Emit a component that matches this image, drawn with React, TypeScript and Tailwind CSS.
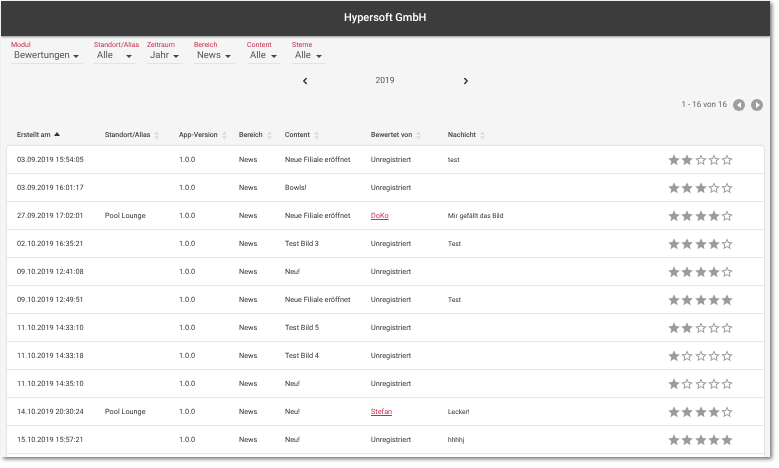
import { ChevronLeft, ChevronRight } from "lucide-react";

const filters = [
  { label: "Modul", value: "Bewertungen", width: "w-[72px]", gap: "mr-[11px]" },
  { label: "Standort/Alias", value: "Alle", width: "w-[42px]", gap: "mr-[11px]" },
  { label: "Zeitraum", value: "Jahr", width: "w-[36px]", gap: "mr-[11px]" },
  { label: "Bereich", value: "News", width: "w-[41px]", gap: "mr-[12px]" },
  { label: "Content", value: "Alle", width: "w-[34px]", gap: "mr-[11px]" },
  { label: "Sterne", value: "Alle", width: "w-[34px]", gap: "" },
];

const columns = ["Standort/Alias", "App-Version", "Bereich", "Content", "Bewertet von", "Nachicht"];

const rows = [
  { date: "03.09.2019 15:54:05", alias: "", content: "Neue Filiale eröffnet", by: "Unregistriert", note: "test", stars: 2 },
  { date: "03.09.2019 16:01:17", alias: "", content: "Bowls!", by: "Unregistriert", note: "", stars: 3 },
  { date: "27.09.2019 17:02:01", alias: "Pool Lounge", content: "Neue Filiale eröffnet", by: "DoKo", note: "Mir gefällt das Bild", stars: 4 },
  { date: "02.10.2019 16:35:21", alias: "", content: "Test Bild 3", by: "Unregistriert", note: "Test", stars: 4 },
  { date: "09.10.2019 12:41:08", alias: "", content: "Neu!", by: "Unregistriert", note: "", stars: 4 },
  { date: "09.10.2019 12:49:51", alias: "", content: "Neue Filiale eröffnet", by: "Unregistriert", note: "Test", stars: 5 },
  { date: "11.10.2019 14:33:10", alias: "", content: "Test Bild 5", by: "Unregistriert", note: "", stars: 2 },
  { date: "11.10.2019 14:33:18", alias: "", content: "Test Bild 4", by: "Unregistriert", note: "", stars: 1 },
  { date: "11.10.2019 14:35:10", alias: "", content: "Neu!", by: "Unregistriert", note: "", stars: 1 },
  { date: "14.10.2019 20:30:24", alias: "Pool Lounge", content: "Neu!", by: "Stefan", note: "Lecker!", stars: 4 },
  { date: "15.10.2019 15:57:21", alias: "", content: "Neu!", by: "Unregistriert", note: "hhhhj", stars: 5 },
];

const gridCols = "grid grid-cols-[88px_74px_60px_46px_86px_77px_1fr]";

function Caret() {
  return <span className="h-0 w-0 border-x-[3px] border-t-[3px] border-x-transparent border-t-[#444]" />;
}

function SortArrows() {
  return (
    <svg width="5" height="9" viewBox="0 0 6 10" className="ml-[4px] fill-[#dcdcdc]">
      <path d="M3 0L6 4H0z" />
      <path d="M3 10L0 6H6z" />
    </svg>
  );
}

function Star({ filled }: { filled: boolean }) {
  return (
    <svg width="14" height="14" viewBox="0 0 24 24" className="-mx-[0.35px] fill-[#9b9b9b]">
      {filled ? (
        <path d="M12 17.27L18.18 21l-1.64-7.03L22 9.24l-7.19-.61L12 2 9.19 8.63 2 9.24l5.46 4.73L5.82 21z" />
      ) : (
        <path d="M22 9.24l-7.19-.62L12 2 9.19 8.63 2 9.24l5.46 4.73L5.82 21 12 17.27 18.18 21l-1.63-7.03L22 9.24zM12 15.4l-3.76 2.27 1-4.28-3.32-2.88 4.38-.38L12 6.1l1.71 4.04 4.38.38-3.32 2.88 1 4.28L12 15.4z" />
      )}
    </svg>
  );
}

function PageButton({ dir }: { dir: "left" | "right" }) {
  return (
    <span className="flex size-[12px] items-center justify-center rounded-full bg-[#9e9e9e]">
      {dir === "left" ? (
        <span className="mr-[1px] h-0 w-0 border-y-[3.5px] border-r-[4.5px] border-y-transparent border-r-white" />
      ) : (
        <span className="ml-[1px] h-0 w-0 border-y-[3.5px] border-l-[4.5px] border-y-transparent border-l-white" />
      )}
    </span>
  );
}

export default function App() {
  return (
    <div className="h-[468px] w-[779px] overflow-hidden bg-white pt-[1px] pl-[1px] font-['Roboto',sans-serif] [text-rendering:geometricPrecision]">
      <div className="h-[456px] w-[769px] overflow-hidden bg-[#f5f5f5] shadow-[2px_2px_4px_rgba(0,0,0,0.55)]">
        <header className="flex h-[35px] items-center justify-center bg-[#3c3c3c] text-[11px] font-medium text-white shadow-[0_1px_2px_rgba(0,0,0,0.4)]">
          <span className="will-change-transform">Hypersoft GmbH</span>
        </header>

        <div className="flex pt-[4px] pl-[10px] will-change-transform">
          {filters.map((filter) => (
            <div key={filter.label} className={`${filter.width} ${filter.gap}`}>
              <div className="h-[10px] text-[7px] leading-[10px] whitespace-nowrap text-[#c2304f]">{filter.label}</div>
              <div className="flex h-[14px] items-center justify-between border-b border-[#e2e2e2] pr-[4px] pl-[3px] text-[9.5px] text-[#555]">
                <span>{filter.value}</span>
                <Caret />
              </div>
            </div>
          ))}
        </div>

        <div className="mt-[10px] flex h-[14px] items-center text-[8.5px] text-[#555] will-change-transform">
          <ChevronLeft className="ml-[299px] size-[10px] text-[#222]" strokeWidth={3} />
          <span className="ml-[65px] w-[20px] text-center">2019</span>
          <ChevronRight className="ml-[66px] size-[10px] text-[#222]" strokeWidth={3} />
        </div>

        <div className="mt-[10px] flex h-[14px] items-center justify-end gap-[6px] pr-[7px] text-[8px] text-[#666] will-change-transform">
          <span>1 - 16 von 16</span>
          <PageButton dir="left" />
          <PageButton dir="right" />
        </div>

        <div className={`${gridCols} mt-[12px] h-[22px] items-center px-[16px] text-[7px] font-medium text-[#444] will-change-transform`}>
          <div className="flex items-center">
            Erstellt am
            <span className="mb-[3px] ml-[3px] h-0 w-0 border-x-[3px] border-b-[4px] border-x-transparent border-b-[#333]" />
          </div>
          {columns.map((column) => (
            <div key={column} className="flex items-center whitespace-nowrap">
              {column}
              <SortArrows />
            </div>
          ))}
        </div>

        <div className="mx-[6px] rounded-t-[2px] bg-white shadow-[0_0_2px_rgba(0,0,0,0.25)]">
          {rows.map((row) => (
            <div
              key={row.date}
              className={`${gridCols} h-[28px] items-center border-b border-[#e6e6e6] px-[10px] text-[7.3px] leading-[12px] whitespace-nowrap text-[#333] will-change-transform`}
            >
              <div className="pt-[1px]">{row.date}</div>
              <div className="pt-[1px]">{row.alias}</div>
              <div className="pt-[1px]">1.0.0</div>
              <div className="pt-[1px]">News</div>
              <div className="pt-[1px]">{row.content}</div>
              <div className={row.by === "Unregistriert" ? "pt-[1px]" : "pt-[1px] text-[#c2304f] underline"}>{row.by}</div>
              <div className="flex items-center justify-between">
                <span className="pt-[1px] text-[6.7px]">{row.note}</span>
                <span className="mr-[20px] flex">
                  {[1, 2, 3, 4, 5].map((n) => (
                    <Star key={n} filled={n <= row.stars} />
                  ))}
                </span>
              </div>
            </div>
          ))}
          <div className="h-[8px]" />
        </div>
      </div>
    </div>
  );
}
